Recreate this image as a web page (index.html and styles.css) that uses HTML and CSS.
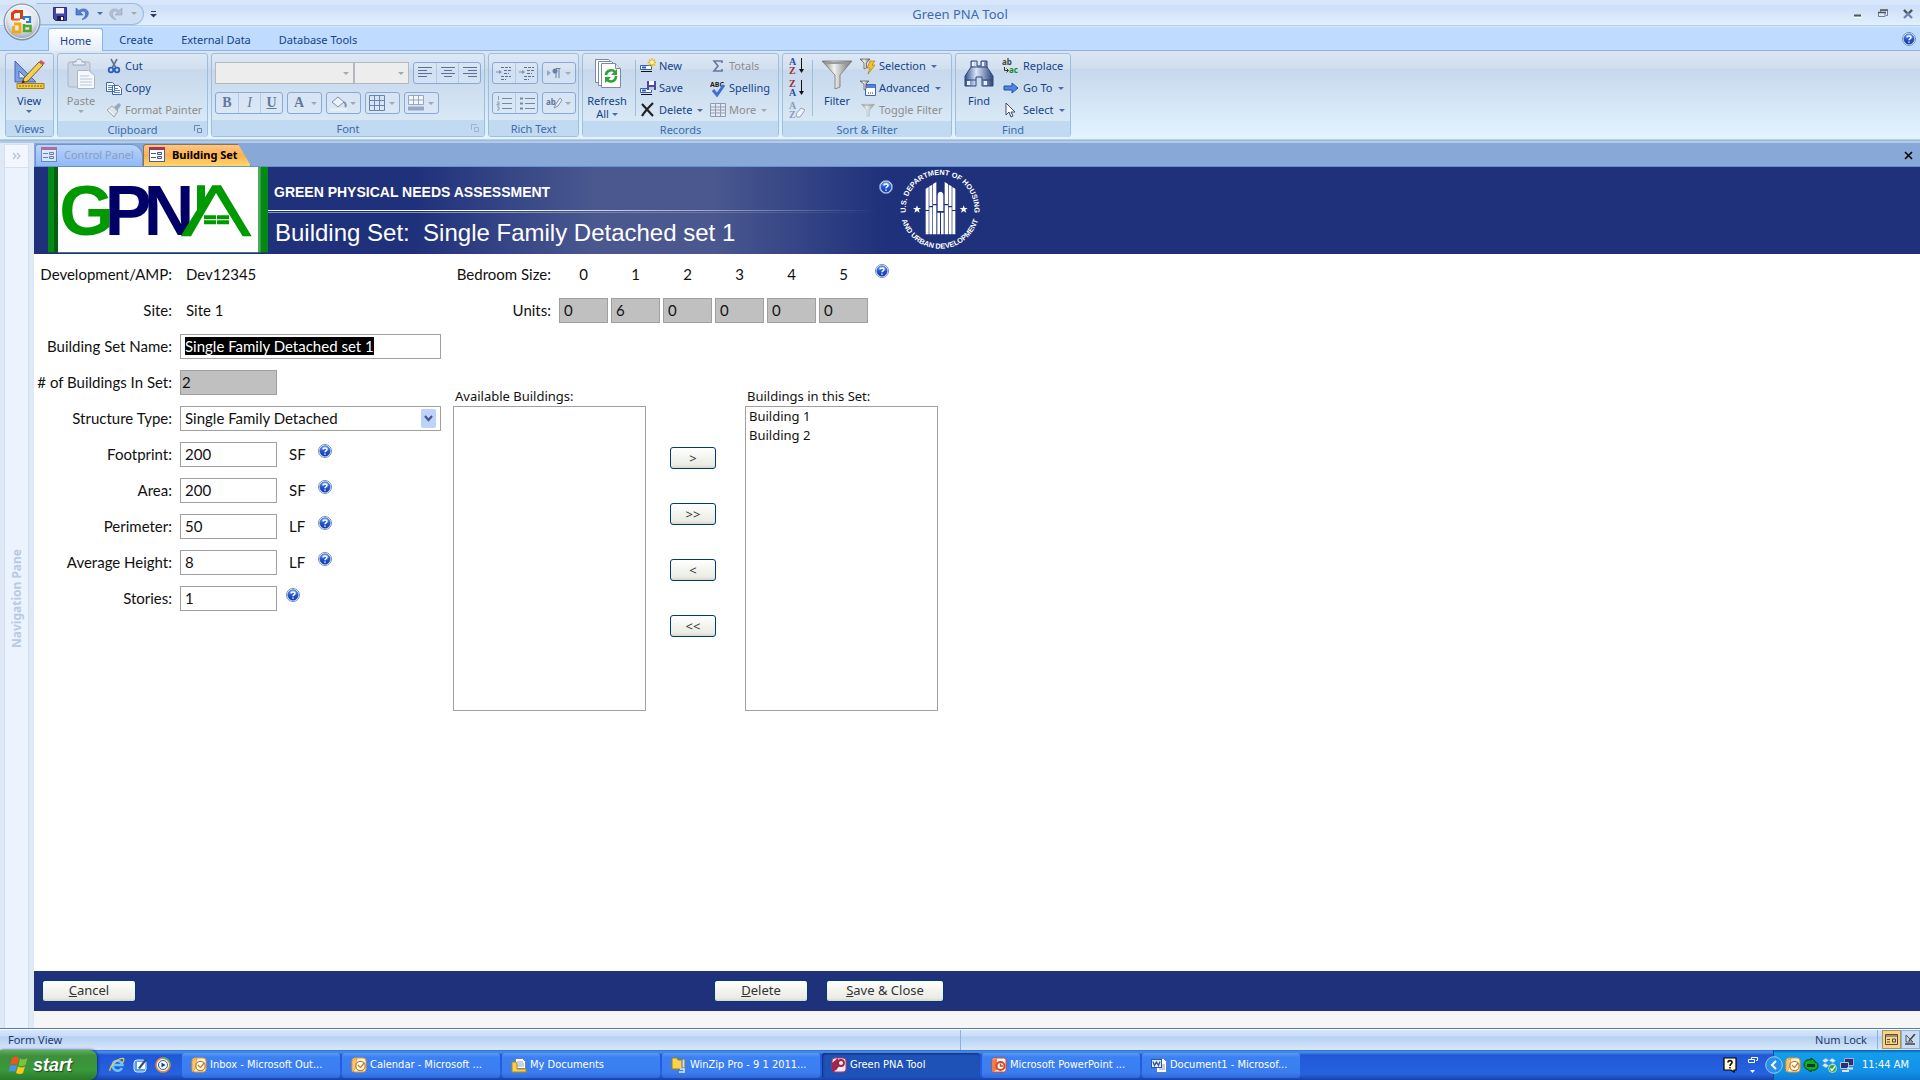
FILE: index.html
```html
<!DOCTYPE html>
<html lang="en">
<head>
<meta charset="utf-8">
<title>Green PNA Tool</title>
<link rel="stylesheet" href="styles.css">
</head>
<body>
<svg class="defs" aria-hidden="true">
  <defs>
    <linearGradient id="blueball" x1="0" y1="0" x2="0" y2="1"><stop offset="0" stop-color="#7fb0f5"/><stop offset=".5" stop-color="#1f57d8"/><stop offset="1" stop-color="#1238b0"/></linearGradient>
    <linearGradient id="steel" x1="0" y1="0" x2="1" y2="0"><stop offset="0" stop-color="#777"/><stop offset=".4" stop-color="#f2f2f2"/><stop offset="1" stop-color="#6d6d6d"/></linearGradient>
    <linearGradient id="bino" x1="0" y1="0" x2="1" y2="0"><stop offset="0" stop-color="#33508c"/><stop offset=".4" stop-color="#dbe6fa"/><stop offset="1" stop-color="#2c4377"/></linearGradient>
    <radialGradient id="orb" cx=".5" cy=".35" r=".65"><stop offset="0" stop-color="#ffffff"/><stop offset=".6" stop-color="#dfe5ec"/><stop offset="1" stop-color="#8d9aab"/></radialGradient>
  </defs>
  <symbol id="help" viewBox="0 0 14 14">
    <circle cx="7" cy="7" r="6.500" fill="#fff" stroke="#6d8fc4"/>
    <circle cx="7" cy="7" r="5.200" fill="url(#blueball)" stroke="#2a50a8" stroke-width=".6"/>
    <path d="M5 5.600C5 3.500 9 3.500 9 5.600C9 6.900 7 6.900 7 8.300M7 9.500V10.700" fill="none" stroke="#fff" stroke-width="1.500"/>
  </symbol>
  <symbol id="formicon" viewBox="0 0 16 15">
    <rect x=".5" y=".5" width="15" height="14" fill="#fff" stroke="#4a5f9e"/>
    <rect x="0" y="0" width="16" height="3" fill="#a5355c"/>
    <path d="M2 6.500H7M2 10.500H7" stroke="#44547d"/><path d="M8.500 5.500h4v2h-4zM8.500 9.500h4v2h-4z" fill="#dfe8f8" stroke="#44547d"/>
  </symbol>
  <symbol id="outlook" viewBox="0 0 16 16">
    <rect x="1" y="1" width="14" height="14" rx="3" fill="#fff3d6" stroke="#e8962e"/>
    <path d="M1 4L6 1L4 12L1 15z" fill="#f7c774" stroke="#d98722" stroke-width=".6"/>
    <circle cx="9.500" cy="9" r="4.600" fill="#fff" stroke="#c77d1e" stroke-width="1.200"/><path d="M7 8l2.500 2.600L13 6" fill="none" stroke="#c77d1e" stroke-width="1.300"/>
  </symbol>
  <symbol id="funnel" viewBox="0 0 32 32">
    <path d="M1 3H31L19 17V29L14 31V17z" fill="url(#steel)" stroke="#777" stroke-width=".8"/><path d="M3 4H29L27 6H5z" fill="#999"/>
  </symbol>
</svg>

<header class="titlebar">
  <div class="quickbar">
    <div class="qat">
      <button class="plain" aria-label="Save"><svg width="14" height="14" viewBox="0 0 14 14"><path d="M.500.500h13v13h-11l-2-2z" fill="#4747a8" stroke="#2c2c80"/><path d="M3 1h8v5.500H3z" fill="#f4f4fb"/><path d="M4 9h7v5H4z" fill="#1d1d46"/><path d="M8 10h2v3H8z" fill="#fff"/></svg></button>
      <button class="plain" aria-label="Undo"><svg width="14" height="14" viewBox="0 0 14 14"><path d="M1 1v7h7L5.500 5.500C8 3 11 4 10.500 7.500C10.300 9.500 9 11 7 12.500C11 12 13.500 9 13.300 6C13 2 8 .500 4 3.500z" fill="#4f7fd6" stroke="#2d59ad" stroke-width=".6"/></svg></button>
      <i class="caret"></i>
      <button class="plain" aria-label="Redo"><svg width="14" height="14" viewBox="0 0 14 14"><path d="M13 1v7H6l2.500-2.500C6 3 3 4 3.500 7.500C3.700 9.500 5 11 7 12.500C3 12 .500 9 .700 6C1 2 6 .500 10 3.500z" fill="#b4c0d2" stroke="#94a3ba" stroke-width=".6"/></svg></button>
      <i class="caret off"></i>
    </div>
    <button class="plain" aria-label="Customize"><svg width="7" height="8" viewBox="0 0 7 8"><path d="M1 1.500H6" stroke="#2b3b63"/><path d="M0 4H7L3.500 7.500z" fill="#2b3b63"/></svg></button>
  </div>
  <h1>Green PNA Tool</h1>
  <div class="winbtns">
    <button class="plain" aria-label="Minimize"><svg width="10" height="10"><path d="M1 6.500H8" stroke="#555" stroke-width="2"/><path d="M1 8.500H8" stroke="#fff"/></svg></button>
    <button class="plain" aria-label="Restore"><svg width="10" height="10"><path d="M2.500 3V1.500h7v5H8" fill="none" stroke="#6d7f9e"/><path d="M.500 3.500h6.500v4H.500z" fill="#dfeaf9" stroke="#6782ad"/><path d="M0 3.500H8M2 1H10" stroke="#555" stroke-width="1.500"/></svg></button>
    <button class="plain" aria-label="Close"><svg width="10" height="10"><path d="M1 1l8 8M9 1l-8 8" stroke="#6f86ae" stroke-width="2.400"/><path d="M1 1l3 3M9 1L6 4" stroke="#555" stroke-width="2"/></svg></button>
  </div>
  <button class="orb" aria-label="Office"><svg width="38" height="38" viewBox="0 0 38 38"><circle cx="19" cy="19" r="18" fill="url(#orb)" stroke="#77879c"/><circle cx="19" cy="19" r="16.500" fill="none" stroke="#fff" opacity=".7"/>
    <path d="M9.500 17V10.500L12 8.500h6.500V16" fill="none" stroke="#d8400f" stroke-width="3"/><path d="M9 16.500h8" stroke="#e9551c" stroke-width="2"/>
    <path d="M21 17V14h6v5h-4" fill="none" stroke="#2b7cd0" stroke-width="2.200"/><path d="M11 21h6v8h-6.500v-6" fill="none" stroke="#f3a712" stroke-width="2.800"/><path d="M21 21v7h6.500v-5H22" fill="none" stroke="#58a52b" stroke-width="2.600"/></svg></button>
</header>

<nav class="tabs">
  <a class="tab on" href="#">Home</a><a class="tab" href="#">Create</a><a class="tab" href="#">External Data</a><a class="tab" href="#">Database Tools</a>
  <button class="plain tabhelp" aria-label="Help"><svg width="14" height="14"><use href="#help"/></svg></button>
</nav>

<div class="ribbon">
  <section class="group g-views">
    <div class="body">
      <button class="big"><svg width="32" height="32" viewBox="0 0 32 32"><path d="M2 3V24H23z" fill="#7f9fe0" stroke="#4467b8"/><path d="M6 13v7h7z" fill="#dce7f9" stroke="#4467b8"/><path d="M9 25l2-5L26 4l4 3L15 23z" fill="#f3cf53" stroke="#6b5213" stroke-width=".9"/><path d="M26 4l2-2 4 3-2 2z" fill="#c8586b"/><path d="M9 25l1-3 2 2z" fill="#222"/><path d="M4 25.500h27v5H4z" fill="#f2c744" stroke="#a87d12"/><path d="M7 27v2M10 27v2M13 27v2M16 27v2M19 27v2M22 27v2M25 27v2M28 27v2" stroke="#8d690e"/></svg><span>View</span><i class="caret"></i></button>
    </div><h2>Views</h2>
  </section>
  <section class="group g-clip">
    <div class="body">
      <button class="big off"><svg width="32" height="32" viewBox="0 0 32 32"><rect x="3" y="4" width="22" height="25" rx="2" fill="#cdd6e4" stroke="#a9b5c9"/><path d="M8 7V4h3c0-4 6-4 6 0h3v3z" fill="#e9eef5" stroke="#9aa8bd"/><path d="M12.500 12.500h11l6 5v13h-17z" fill="#f6f9fd" stroke="#a9b5c9"/><path d="M15 18h9M15 21h12M15 24h12M15 27h12" stroke="#b9c5d8"/></svg><span>Paste</span><i class="caret"></i></button>
      <div class="col">
        <button class="small"><svg width="16" height="16" viewBox="0 0 16 16"><path d="M5 1l5 9M11 1L6 10" stroke="#66748f" stroke-width="1.600"/><circle cx="5" cy="12" r="2.300" fill="none" stroke="#2d5cc0" stroke-width="1.800"/><circle cx="11" cy="12" r="2.300" fill="none" stroke="#2d5cc0" stroke-width="1.800"/></svg>Cut</button>
        <button class="small"><svg width="16" height="16" viewBox="0 0 16 16"><path d="M.500 2.500h6l2 2v7h-8zM6.500 5.500h6l3 3v6h-9z" fill="#fff" stroke="#3f65b0"/><path d="M2 5.500h4M2 7.500h4M2 9.500h4M8 8.500h4M8 10.500h6M8 12.500h6" stroke="#5b84d0"/></svg>Copy</button>
        <button class="small off"><svg width="16" height="16" viewBox="0 0 16 16"><path d="M1 8l5-4 6 5-4 6z" fill="#dfe3ea" stroke="#9fa8b8"/><path d="M8 5l5-4 2 2-4 6z" fill="#9aa6ba"/><path d="M3 8l5 5" stroke="#fff"/></svg>Format Painter</button>
      </div>
    </div><h2>Clipboard<svg class="launch" width="8" height="8"><path d="M.500 6V.500H6M3.500 3.500h4v4h-4z" fill="none" stroke="#6b87b3"/></svg></h2>
  </section>
  <section class="group g-font">
    <div class="body tools">
      <div class="line">
        <button class="combo wide" aria-label="Font"><i class="caret"></i></button><button class="combo size" aria-label="Font size"><i class="caret"></i></button>
        <div class="set"><button aria-label="Align left"><svg width="16" height="14"><path d="M1 1.500h14M1 4.500h9M1 7.500h14M1 10.500h9" stroke="#5d6f92"/></svg></button><button aria-label="Center"><svg width="16" height="14"><path d="M1 1.500h14M4 4.500h8M1 7.500h14M4 10.500h8" stroke="#5d6f92"/></svg></button><button aria-label="Align right"><svg width="16" height="14"><path d="M1 1.500h14M6 4.500h9M1 7.500h14M6 10.500h9" stroke="#5d6f92"/></svg></button></div>
      </div>
      <div class="line">
        <div class="set"><button class="glyph b">B</button><button class="glyph i">I</button><button class="glyph u">U</button></div>
        <div class="set drop"><button class="glyph">A</button><i class="caret"></i></div>
        <div class="set drop"><button aria-label="Fill"><svg width="17" height="16"><path d="M2 7l6-5 6 5-6 5z" fill="#eef2f8" stroke="#8190ad"/><path d="M14 7c2 2 2 4 1 5" fill="none" stroke="#8190ad" stroke-width="2"/><path d="M0 14.500h17" stroke="#e9eef4" stroke-width="3"/></svg></button><i class="caret"></i></div>
        <div class="set drop"><button aria-label="Gridlines"><svg width="17" height="17"><path d="M.500.500h15v15H.500zM5.500.500v15M10.500.500v15M.500 5.500h15M.500 10.500h15" fill="none" stroke="#6b83ae"/></svg></button><i class="caret"></i></div>
        <div class="set drop"><button aria-label="Row colour"><svg width="17" height="17"><path d="M.500.500h15v9H.500zM5.500.500v9M10.500.500v9M.500 5h15" fill="#f3f6fa" stroke="#98a7c0"/><path d="M0 13.500h16" stroke="#98a7c6" stroke-width="4"/></svg></button><i class="caret"></i></div>
      </div>
    </div><h2>Font<svg class="launch" width="8" height="8"><path d="M.500 6V.500H6M3.500 3.500h4v4h-4z" fill="none" stroke="#9fb2cf"/></svg></h2>
  </section>
  <section class="group g-rich">
    <div class="body tools">
      <div class="line">
        <div class="set"><button aria-label="Decrease indent"><svg width="16" height="15"><path d="M5 1.500h10M8 4.500h7M8 7.500h5M5 10.500h10M5 13.500h5" stroke="#5d6f92" stroke-dasharray="3 1"/><path d="M6 6L3 4v4z" fill="#8190ad"/><path d="M0 6h4" stroke="#8190ad"/></svg></button><button aria-label="Increase indent"><svg width="16" height="15"><path d="M5 1.500h10M8 4.500h7M8 7.500h5M5 10.500h10M5 13.500h5" stroke="#5d6f92" stroke-dasharray="3 1"/><path d="M3 4l3 2-3 2z" fill="#8190ad"/><path d="M0 6h4" stroke="#8190ad"/></svg></button></div>
        <div class="set drop"><button aria-label="Direction"><svg width="15" height="13"><path d="M0 3l4 3-4 3z" fill="#97a6c0"/><path d="M9 2v9M12 2v9M13.500 1.500H9" stroke="#6b7ea4"/><circle cx="8" cy="4" r="2.500" fill="#6b7ea4"/></svg></button><i class="caret"></i></div>
      </div>
      <div class="line">
        <div class="set"><button aria-label="Numbering"><svg width="16" height="15"><path d="M6 2.500h10M6 7.500h10M6 12.500h10" stroke="#7586a8"/><path d="M2.500 0v4M1 6h2v2H1v1h3M1 11h2v3H1" fill="none" stroke="#8c9bb8"/></svg></button><button aria-label="Bullets"><svg width="16" height="15"><path d="M6 2.500h10M6 7.500h10M6 12.500h10" stroke="#7586a8"/><path d="M1 2.500h3M1 7.500h3M1 12.500h3" stroke="#7586a8" stroke-width="2"/></svg></button></div>
        <div class="set drop"><button aria-label="Highlight"><svg width="17" height="16"><text x="0" y="10" class="ab" fill="#64759a">ab</text><path d="M8 13l2-4 4-6 2 2-4 6z" fill="#eef2f8" stroke="#8190ad"/></svg></button><i class="caret"></i></div>
      </div>
    </div><h2>Rich Text</h2>
  </section>
  <section class="group g-rec">
    <div class="body">
      <button class="big wider"><svg width="32" height="32" viewBox="0 0 32 32"><path d="M4.500 1.500h13l5 5v18h-18z" fill="#fff" stroke="#7d8aa5"/><path d="M7.500 3.500h13l5 5v19h-18z" fill="#fff" stroke="#7d8aa5"/><path d="M10.500 5.500h14l5 5v19h-19z" fill="#fff" stroke="#7d8aa5"/><path d="M24.500 5.500v5h5" fill="#dbe4f2" stroke="#7d8aa5"/><path d="M15 17c0-5 7-6 9-3M25 18c0 6-7 7-9 3" fill="none" stroke="#2da336" stroke-width="2.600"/><path d="M26 11v6h-6zM14 25v-6h6z" fill="#2da336"/></svg><span>Refresh<br>All <i class="caret"></i></span></button>
      <div class="rule"></div>
      <div class="col c1">
        <button class="small"><svg width="16" height="16" viewBox="0 0 16 16"><path d="M.500 7.500h11v4H.500z" fill="#fff" stroke="#2f5fb8"/><path d="M2 9.500h4" stroke="#2f5fb8" stroke-width="2"/><path d="M1 13.500h11" stroke="#111"/><path d="M12 0v9M7.500 4.500h9M9 1.500l6 6M15 1.500l-6 6" stroke="#f0b310" stroke-width="1.300"/><circle cx="12" cy="4.500" r="2" fill="#fff3a8"/></svg>New</button>
        <button class="small"><svg width="16" height="16" viewBox="0 0 16 16"><path d="M.500 8.500h11v4H.500z" fill="#fff" stroke="#2f5fb8"/><path d="M2 10.500h4" stroke="#2f5fb8" stroke-width="2"/><path d="M1 14.500h11" stroke="#111"/><path d="M7 1h9v9H7z" fill="#4a4a9f"/><path d="M9 1h5v4H9z" fill="#fff"/><path d="M9 7h5v3H9z" fill="#c7c7e0"/></svg>Save</button>
        <button class="small"><svg width="16" height="16" viewBox="0 0 16 16"><path d="M2 2l11 12M13 1C9 5 5 9 2 14" fill="none" stroke="#222" stroke-width="2.200"/></svg>Delete<i class="caret"></i></button>
      </div>
      <div class="col">
        <button class="small off"><svg width="16" height="16" viewBox="0 0 16 16"><path d="M12 5V3H4l4 5-4 5h8v-2" fill="none" stroke="#65779c" stroke-width="1.600"/></svg>Totals</button>
        <button class="small"><svg width="16" height="18" viewBox="0 0 16 18"><text x="0" y="8" class="abc" fill="#222">ABC</text><path d="M3 11l4 5 7-10" fill="none" stroke="#3d6fd6" stroke-width="3"/></svg>Spelling</button>
        <button class="small off"><svg width="16" height="16" viewBox="0 0 16 16"><path d="M.500 1.500h15v13H.500zM5.500 1.500v13M10.500 1.500v13M.500 5h15M.500 8h15M.500 11h15" fill="#e6ebf3" stroke="#8d9bb5"/></svg>More<i class="caret"></i></button>
      </div>
    </div><h2>Records</h2>
  </section>
  <section class="group g-sort">
    <div class="body">
      <div class="col sorts">
        <button class="small" aria-label="Ascending"><svg width="16" height="18"><text x="0" y="8" class="az" fill="#2c4fa3">A</text><text x="0" y="17" class="az" fill="#a12d2d">Z</text><path d="M12.500 1v14" stroke="#111"/><path d="M10 12h5l-2.500 4z" fill="#111"/></svg></button>
        <button class="small" aria-label="Descending"><svg width="16" height="18"><text x="0" y="8" class="az" fill="#a12d2d">Z</text><text x="0" y="17" class="az" fill="#2c4fa3">A</text><path d="M12.500 1v14" stroke="#111"/><path d="M10 12h5l-2.500 4z" fill="#111"/></svg></button>
        <button class="small" aria-label="Clear sorts"><svg width="16" height="18"><text x="0" y="8" class="az" fill="#8d9bb5">A</text><text x="0" y="17" class="az" fill="#8d9bb5">Z</text><path d="M7 13l5-6 4 2-5 7H8z" fill="#f0f3f8" stroke="#95a2b8"/></svg></button>
      </div>
      <div class="rule"></div>
      <button class="big"><svg width="32" height="32"><use href="#funnel"/></svg><span>Filter</span></button>
      <div class="col">
        <button class="small"><svg width="16" height="16" viewBox="0 0 16 16"><path d="M0 1h10L6.500 5v5L4 11V5z" fill="url(#steel)" stroke="#555" stroke-width=".7"/><path d="M10 3h5l-3 4h3l-7 9 2-6H7z" fill="#f8c22c" stroke="#a97b10" stroke-width=".7"/></svg>Selection<i class="caret"></i></button>
        <button class="small"><svg width="16" height="16" viewBox="0 0 16 16"><path d="M5.500 4.500h10v11h-10z" fill="#fff" stroke="#3d66b5"/><path d="M6 6.500h9" stroke="#4f82df" stroke-width="3"/><path d="M8 13h1M10 13h1M12 13h1" stroke="#333"/><path d="M0 1h9L6 4v5L4 10V4z" fill="url(#steel)" stroke="#555" stroke-width=".7"/></svg>Advanced<i class="caret"></i></button>
        <button class="small off"><svg width="16" height="14" opacity=".7"><use href="#funnel"/></svg>Toggle Filter</button>
      </div>
    </div><h2>Sort &amp; Filter</h2>
  </section>
  <section class="group g-find">
    <div class="body">
      <button class="big"><svg width="32" height="32" viewBox="0 0 32 32"><path d="M8 3h6v5h4V3h6v6l6 9v10H19V19h-6v9H2V18l6-9z" fill="url(#bino)" stroke="#2f4678"/><path d="M2 22h11M19 22h11M8 9h16" stroke="#2f4678"/><path d="M4 23h3v4H4zM21 23h3v4h-3zM9 4h2v4H9zM19 4h2v4h-2z" fill="#e9f0fc"/></svg><span>Find</span></button>
      <div class="col">
        <button class="small"><svg width="18" height="18" viewBox="0 0 18 18"><text x="0" y="8" class="ab" fill="#444">ab</text><text x="7" y="16" class="ab" fill="#188a2b">ac</text><path d="M2.500 10v3.500H6M4.500 11.500l2 2-2 2" fill="none" stroke="#333"/></svg>Replace</button>
        <button class="small"><svg width="18" height="16" viewBox="0 0 18 16"><path d="M2 6h8V3l6 5-6 5v-3H2z" fill="#4f86e8" stroke="#23509f"/></svg>Go To<i class="caret"></i></button>
        <button class="small"><svg width="18" height="16" viewBox="0 0 18 16"><path d="M4 1v12l3-3 2 5 2-1-2-4h4z" fill="#fff" stroke="#3c4a66"/></svg>Select<i class="caret"></i></button>
      </div>
    </div><h2>Find</h2>
  </section>
</div>

<div class="workspace">
  <aside class="navpane">
    <button class="expand" aria-label="Expand"><svg width="10" height="8"><path d="M1 1l3 3-3 3M5 1l3 3-3 3" fill="none" stroke="#b3c4dd" stroke-width="1.300"/></svg></button>
    <div class="strip"><span>Navigation Pane</span></div>
  </aside>
  <div class="doc">
    <div class="doctabs">
      <a class="dtab" href="#"><svg width="16" height="15" opacity=".6"><use href="#formicon"/></svg>Control Panel</a>
      <a class="dtab on" href="#"><svg width="16" height="15"><use href="#formicon"/></svg>Building Set</a>
      <button class="plain dclose" aria-label="Close"><svg width="9" height="9"><path d="M1 1l7 7M8 1L1 8" stroke="#000" stroke-width="1.600"/></svg></button>
    </div>

    <div class="banner">
      <svg class="logo" width="220" height="86" viewBox="54 20 660 258" role="img" aria-label="GPNA">
        <path d="M54 20h660v256H54z" fill="#028a14"/><path d="M72 20h12v256H72z" fill="#04600c"/><path d="M684 20h8v256h-8z" fill="#4fa85a"/>
        <path d="M84 20h600v256H84z" fill="#fff"/>
        <text x="88" y="224" class="gpn" fill="#009900">G</text><text x="224" y="224" class="gpn" fill="#000066">P</text><text x="341" y="224" class="gpn" fill="#000066">N</text>
        <path d="M452 228L501 148V75h24v36l22-36h26l92 153h-27L558 98L483 228z" fill="#009900"/>
        <path d="M522 165h36v12h-36zM561 165h36v12h-36zM522 180h36v12h-36zM561 180h36v12h-36z" fill="#009900"/>
      </svg>
      <div class="heading"><p>GREEN PHYSICAL NEEDS ASSESSMENT</p><h2>Building Set:  Single Family Detached set 1</h2></div>
      <button class="plain bhelp" aria-label="Help"><svg width="14" height="14"><use href="#help"/></svg></button>
      <svg class="seal" width="84" height="84" viewBox="1195 19 252 252" fill="#fff">
        <path id="arcTop" d="M1224 180A103 103 0 1 1 1418 180" fill="none"/><path id="arcBot" d="M1202 145A119 119 0 0 0 1440 145" fill="none"/>
        <text class="ring"><textPath href="#arcTop" startOffset="50%" text-anchor="middle">U.S. DEPARTMENT OF HOUSING</textPath></text>
        <text class="ring"><textPath href="#arcBot" startOffset="50%" text-anchor="middle">AND URBAN DEVELOPMENT</textPath></text>
        <path d="M1278 84l9-5v69h-9zM1289 77l9-5v64h-9zM1300 70l10-6v66h-10zM1335 64l10 6v60h-10zM1347 72l9 5v59h-9zM1358 79l9 5v64h-9zM1278 151h9v70h-9zM1289 140h9v81h-9zM1300 134h10v87h-10zM1335 134h10v87h-10zM1347 140h9v81h-9zM1358 151h9v70h-9zM1314 104q0-11 10-11 8 3 7 12v46h-17zM1313 156h8v65h-8zM1324 156h8v65h-8z"/>
        <path d="M1252 134l3 8h9l-7 5 3 9-8-5-8 5 3-9-7-5h9zM1392 134l3 8h9l-7 5 3 9-8-5-8 5 3-9-7-5h9z"/>
      </svg>
    </div>

    <form class="form">
      <div class="fields">
        <div class="row"><span class="lab">Development/AMP:</span><span class="val">Dev12345</span></div>
        <div class="row"><span class="lab">Site:</span><span class="val">Site 1</span></div>
        <div class="row"><label class="lab" for="setname">Building Set Name:</label><input class="box long" id="setname" value="Single Family Detached set 1"></div>
        <div class="row"><label class="lab" for="count"># of Buildings In Set:</label><input class="box ro count" id="count" value="2" readonly></div>
        <div class="row"><label class="lab" for="stype">Structure Type:</label><span class="pick"><select class="box long" id="stype"><option>Single Family Detached</option></select><svg width="15" height="19"><rect width="15" height="19" rx="2" fill="#bfd2fa"/><path d="M4 7l3.500 4L11 7" fill="none" stroke="#44598a" stroke-width="2.200"/></svg></span></div>
        <div class="row"><label class="lab" for="foot">Footprint:</label><input class="box" id="foot" value="200"><span class="unit">SF</span><button type="button" class="plain fhelp" aria-label="Help"><svg width="14" height="14"><use href="#help"/></svg></button></div>
        <div class="row"><label class="lab" for="area">Area:</label><input class="box" id="area" value="200"><span class="unit">SF</span><button type="button" class="plain fhelp" aria-label="Help"><svg width="14" height="14"><use href="#help"/></svg></button></div>
        <div class="row"><label class="lab" for="perim">Perimeter:</label><input class="box" id="perim" value="50"><span class="unit">LF</span><button type="button" class="plain fhelp" aria-label="Help"><svg width="14" height="14"><use href="#help"/></svg></button></div>
        <div class="row"><label class="lab" for="height">Average Height:</label><input class="box" id="height" value="8"><span class="unit">LF</span><button type="button" class="plain fhelp" aria-label="Help"><svg width="14" height="14"><use href="#help"/></svg></button></div>
        <div class="row"><label class="lab" for="stories">Stories:</label><input class="box" id="stories" value="1"><button type="button" class="plain fhelp near" aria-label="Help"><svg width="14" height="14"><use href="#help"/></svg></button></div>
      </div>
      <div class="side">
        <div class="units">
          <span class="ulab">Bedroom Size:</span><span>0</span><span>1</span><span>2</span><span>3</span><span>4</span><span>5</span><button type="button" class="plain uhelp" aria-label="Help"><svg width="14" height="14"><use href="#help"/></svg></button>
          <span class="ulab">Units:</span><input class="box ro" aria-label="0 bedroom units" value="0" readonly><input class="box ro" aria-label="1 bedroom units" value="6" readonly><input class="box ro" aria-label="2 bedroom units" value="0" readonly><input class="box ro" aria-label="3 bedroom units" value="0" readonly><input class="box ro" aria-label="4 bedroom units" value="0" readonly><input class="box ro" aria-label="5 bedroom units" value="0" readonly>
        </div>
        <div class="transfer">
          <div class="list"><label for="avail">Available Buildings:</label><select id="avail" size="10" multiple></select></div>
          <div class="moves"><button type="button">&gt;</button><button type="button">&gt;&gt;</button><button type="button">&lt;</button><button type="button">&lt;&lt;</button></div>
          <div class="list"><label for="inset">Buildings in this Set:</label><select id="inset" size="10" multiple><option>Building 1</option><option>Building 2</option></select></div>
        </div>
      </div>
    </form>

    <footer class="actions">
      <button class="act"><u>C</u>ancel</button><button class="act del"><u>D</u>elete</button><button class="act save"><u>S</u>ave &amp; Close</button>
    </footer>
    <div class="below"></div>
  </div>
</div>

<div class="status">
  <span class="mode">Form View</span><span class="lock">Num Lock</span>
  <div class="views"><button class="on" aria-label="Form view"><svg width="13" height="11"><path d="M.500.500h12v10H.500zM0 2h13M2 5.500h3M2 8h3M7.500 5h3v3h-3z" fill="none" stroke="#4d4d4d"/></svg></button><button aria-label="Design view"><svg width="11" height="11"><path d="M1 1v7h7z" fill="none" stroke="#555"/><path d="M10 0L4 7M0 10h10" stroke="#444" stroke-width="1.600"/></svg></button></div>
</div>

<div class="taskbar">
  <button class="start"><svg width="20" height="20" viewBox="0 0 20 20"><path d="M3 3q4-3 7 0l-2 7q-3-2-7 0z" fill="#f0541e"/><path d="M11 3.500q4 2 7.500-.500l-2 7q-3 2-7 .500z" fill="#7cc242"/><path d="M1 11q4-2 7 0l-2 6q-3-2-6.500 0z" fill="#4a90f0"/><path d="M9 11.500q4 2 7 0l-2 6.500q-3 2-7 0z" fill="#fbc916"/></svg>start</button>
  <div class="quick">
    <button class="plain" aria-label="Internet Explorer"><svg width="16" height="16" viewBox="0 0 16 16"><path d="M13 11a5 5 0 1 1 .5-3H4" fill="none" stroke="#6cc4ff" stroke-width="2.500"/><path d="M1 14C0 10 9 1 14 1.500c2 .5 0 4-1 5" fill="none" stroke="#f5c83c" stroke-width="1.300"/></svg></button>
    <button class="plain" aria-label="Show desktop"><svg width="16" height="16" viewBox="0 0 16 16"><rect x="2" y="3" width="12" height="12" rx="3" fill="#5aa0ec" stroke="#d2e6ff"/><path d="M5 5h8v7H5z" fill="#fff"/><path d="M6 11l7-9 2 1-7 9z" fill="#2d4f86"/></svg></button>
    <button class="plain" aria-label="Media Player"><svg width="16" height="16" viewBox="0 0 16 16"><circle cx="8" cy="8" r="7" fill="#e9eef7" stroke="#e98b28" stroke-width="1.600"/><path d="M8 1a7 7 0 0 1 7 7" fill="none" stroke="#53b848" stroke-width="1.600"/><circle cx="8" cy="8" r="4.500" fill="#fff" stroke="#345fae"/><path d="M6.500 5.500v5l4-2.500z" fill="#1c3d87"/></svg></button>
  </div>
  <div class="tasks">
    <button><svg width="16" height="16"><use href="#outlook"/></svg>Inbox - Microsoft Out...</button>
    <button><svg width="16" height="16"><use href="#outlook"/></svg>Calendar - Microsoft ...</button>
    <button><svg width="16" height="16" viewBox="0 0 16 16"><path d="M4.500 1.500h7l3 3v7h-10z" fill="#fff" stroke="#6a7ea8"/><path d="M6 5h6M6 7h7M6 9h7" stroke="#8ba3d0"/><path d="M1 5h4l1 2v5h9v3H1z" fill="#f6cf59" stroke="#b48915"/></svg>My Documents</button>
    <button><svg width="16" height="16" viewBox="0 0 16 16"><path d="M1 1h5l1 2h7v9H1z" fill="#f8d34e" stroke="#a97e0b"/><path d="M11 2h3v9h-3z" fill="#d5dce8" stroke="#60708d"/><path d="M9 12h4v3H8" fill="none" stroke="#bcd0ef" stroke-width="2"/></svg>WinZip Pro - 9 1 2011...</button>
    <button class="on"><svg width="16" height="16" viewBox="0 0 16 16"><rect x="1" y="1" width="14" height="14" rx="3" fill="#f6e8ee" stroke="#b23a60"/><path d="M1 6l6-5v7l-4 7H1z" fill="#a2264e"/><circle cx="10" cy="6" r="3" fill="none" stroke="#9b2449" stroke-width="1.800"/><path d="M8 8l-4 5" stroke="#9b2449" stroke-width="2"/></svg>Green PNA Tool</button>
    <button><svg width="16" height="16" viewBox="0 0 16 16"><rect x="1" y="1" width="14" height="14" rx="2" fill="#fff" stroke="#d8461d"/><path d="M1 3l5-2v12l-5 2z" fill="#ef7a4a"/><circle cx="9.500" cy="9" r="4" fill="#fff" stroke="#d8461d" stroke-width="2"/><path d="M9.500 6.500V9H12" fill="none" stroke="#d8461d" stroke-width="1.500"/></svg>Microsoft PowerPoint ...</button>
    <button><svg width="16" height="16" viewBox="0 0 16 16"><path d="M5.500 1.500h7l3 3v11h-10z" fill="#fff" stroke="#5b7ab5"/><path d="M10 8h4M10 10h4M8 12h6" stroke="#7f9cd3"/><rect x=".500" y="2.500" width="10" height="8" fill="#e7effb" stroke="#2d54a8"/><path d="M2 4.500l1.500 4 2-3.500 2 3.500 1.500-4" fill="none" stroke="#2d54a8" stroke-width="1.300"/></svg>Document1 - Microsof...</button>
  </div>
  <button class="plain ask" aria-label="Help"><svg width="14" height="16" viewBox="0 0 14 16"><path d="M1 1h12v12h-2v2l-3-2H1z" fill="#fffbd8" stroke="#000" stroke-width="1.200"/><path d="M5 5.500C5 3 9 3 9 5.500C9 7 7 7 7 9M7 10v1.500" fill="none" stroke="#111" stroke-width="1.600"/></svg></button>
  <button class="plain lang" aria-label="Options"><svg width="10" height="18"><path d="M3.500 3V1.500h6v3H8M.500 3.500h6v3h-6z" fill="none" stroke="#fff"/><path d="M2 14h5l-2.500 3z" fill="#fff"/></svg></button>
  <div class="tray">
    <button class="plain chev" aria-label="Show hidden icons"><svg width="18" height="18" viewBox="0 0 18 18"><circle cx="9" cy="9" r="8.300" fill="#2a8fe8" stroke="#8fd0fa"/><path d="M11 5L7 9l4 4" fill="none" stroke="#fff" stroke-width="2"/></svg></button>
    <svg width="16" height="16" viewBox="0 0 16 16"><use href="#outlook"/></svg>
    <svg width="16" height="16" viewBox="0 0 16 16"><path d="M1 8c0-4 3-6 7-5V1l4 3v1c3 1 3 2 3 4 0 3-3 5-7 4v2l-4-3C2 11 1 10 1 8z" fill="#17a821" stroke="#063f0a"/><path d="M4 7h8v3H4z" fill="#133d18"/></svg>
    <svg width="16" height="16" viewBox="0 0 16 16"><path d="M5 1l3 2.500L4 6 1 3.500zM11 1l4 2.500L12 6 8 3.500zM4 6l4 2.500L5 11 1 8.500zM12 6l3 2.500-4 2.500-3-2.500z" fill="#d6eafc" stroke="#4d9be0" stroke-width=".7"/><circle cx="11.500" cy="11.500" r="4" fill="#35a339" stroke="#e8f8e8" stroke-width=".7"/><path d="M9.500 11.500l1.500 2 3-4" fill="none" stroke="#fff" stroke-width="1.300"/></svg>
    <svg width="16" height="16" viewBox="0 0 16 16"><path d="M5.500 1.500h9v7h-9z" fill="#27336e" stroke="#9fb0d4"/><path d="M1.500 5.500h8v6h-8z" fill="#27336e" stroke="#b7c5e2"/><path d="M3 14h7M8 11.500h6" stroke="#dbe3f2" stroke-width="2"/></svg>
    <span>11:44 AM</span>
  </div>
</div>
<script>
const nameBox = document.getElementById('setname');
nameBox.focus();
nameBox.select();
</script>
</body>
</html>
```
FILE: styles.css
```css
* { box-sizing: border-box; }
body {
  margin: 0;
  min-height: 100vh;
  display: flex;
  flex-direction: column;
  background: #bfdbff;
  font: 11px/16px "Noto Sans", "Open Sans", sans-serif;
  color: #15428b;
}
h1, h2, p { margin: 0; font-weight: normal; }
svg { display: block; flex: none; }
button, input, select { font: inherit; color: inherit; margin: 0; }
button { padding: 0; border: 0; background: none; }
a { color: inherit; text-decoration: none; }
.defs { position: absolute; width: 0; height: 0; }
.plain { display: flex; align-items: center; justify-content: center; }
.caret {
  display: inline-block;
  border: 3px solid transparent;
  border-top-color: #4a6da8;
  border-bottom: 0;
  flex: none;
}
.caret.off, .off .caret, .tools .caret { border-top-color: #a3a9b3; }

/* title bar */
.titlebar {
  position: relative;
  display: grid;
  grid-template-columns: 1fr auto 1fr;
  align-items: center;
  height: 27px;
  background: linear-gradient(#d7e6fa 0 5px, #cadef7 5px, #e4effd 25px, #b0d2f2 25px 26px, #d8e8fc 26px);
}
.quickbar { display: flex; align-items: center; gap: 6px; padding-left: 36px; }
.qat {
  display: flex;
  align-items: center;
  gap: 8px;
  width: 108px;
  height: 22px;
  padding-left: 16px;
  border: 1px solid #9dbbe0;
  border-left-color: transparent;
  border-radius: 0 11px 11px 0;
  background: #cfe0f5;
}
.qat .caret + .plain { margin-left: -2px; }
.titlebar h1 { font-size: 13px; color: #3e6aaa; }
.winbtns { display: flex; justify-content: flex-end; gap: 15px; padding-right: 7px; }
.orb { position: absolute; left: 3px; top: 3px; z-index: 2; }

/* ribbon tabs */
.tabs { display: flex; gap: 4px; height: 24px; padding: 1px 4px 0 48px; border-bottom: 1px solid #8db2e3; }
.tab { height: 23px; padding: 0 12px; line-height: 24px; }
.tab.on { border: 1px solid #8db2e3; border-bottom: 0; border-radius: 3px 3px 0 0; background: linear-gradient(#fff, #e4edf8); padding: 0 11px; margin-bottom: -1px; }
.tabhelp { margin-left: auto; }

/* ribbon */
.ribbon {
  display: flex;
  gap: 3px;
  height: 92px;
  padding: 2px 2px 6px 5px;
  background: linear-gradient(#dae6f4, #cfdded 17px, #c7d8ed 18px, #e3f4ff 88px, #8aa6c9 89px, #b3cbe9 90px);
}
.group {
  display: flex;
  flex-direction: column;
  border: 1px solid #9ebfdb;
  border-radius: 3px;
  background: linear-gradient(#dee8f5, #d1dfef 15px, #c7d8ed 16px, #d8e8f5 66px);
}
.group .body { flex: 1; display: flex; padding-top: 1px; }
.group h2 { position: relative; height: 16px; font-size: 11px; line-height: 18px; text-align: center; color: #3e6aaa; background: #c1d9f1; border-radius: 0 0 2px 2px; }
.launch { position: absolute; right: 5px; top: 4px; }
.g-views { width: 49px; }
.g-clip { width: 151px; }
.g-font { width: 274px; }
.g-rich { width: 91px; }
.g-rec { width: 197px; }
.g-sort { width: 170px; }
.g-find { width: 116px; }
.big { display: flex; flex-direction: column; align-items: center; width: 46px; padding-top: 3px; line-height: 13px; }
.wider { width: 48px; }
.big svg { margin-bottom: 4px; }
.big > .caret { margin-top: 3px; }
.big .caret { vertical-align: 2px; }
.off { color: #8d8d8d; }
.col { display: flex; flex-direction: column; }
.g-clip .col { padding-left: 2px; }
.small { display: flex; align-items: center; gap: 3px; height: 22px; white-space: nowrap; }
.small .caret { margin-left: 2px; }
.c1 { width: 70px; }
.rule { width: 1px; margin: 5px 4px; background: #9ebfdb; }
.sorts { padding-left: 6px; }
.sorts + .rule { margin-left: 7px; margin-right: 1px; }
.tools.body { flex-direction: column; gap: 8px; padding: 8px 3px 0; }
.line { display: flex; gap: 4px; height: 22px; }
.combo { display: flex; align-items: center; justify-content: flex-end; padding-right: 4px; border: 1px solid #b5b9bf; background: #ededed; }
.wide { width: 139px; margin-right: -4px; }
.size { width: 55px; }
.set { display: flex; align-items: center; border: 1px solid #86a9d8; border-radius: 3px; background: rgba(225, 235, 248, .4); }
.set button { display: flex; align-items: center; justify-content: center; width: 22px; height: 20px; border-left: 1px solid #b4cae8; }
.set button:first-child { border-left: 0; }
.drop { width: 35px; justify-content: space-between; padding-right: 4px; }
.glyph { font: bold 14px/18px "Liberation Serif", serif; color: #66779b; }
.set .i { font-style: italic; font-weight: normal; }
.set .u { text-decoration: underline; }
.ab { font: bold 8px "Noto Sans", sans-serif; }
.abc { font: bold 7px "Noto Sans", sans-serif; }
.az { font: bold 10px "Liberation Serif", serif; }

/* work area */
.workspace { flex: 1; display: flex; }
.navpane { display: flex; flex-direction: column; width: 34px; padding: 1px 5px 0 4px; background: #dfe9f6; }
.expand { display: flex; align-items: center; justify-content: center; height: 24px; border: 1px solid #d5e1f1; background: #f3f7fd; }
.strip { flex: 1; display: flex; align-items: center; justify-content: center; border: 1px solid #d0def0; border-width: 0 1px; background: #ebf3fe; }
.strip span { writing-mode: vertical-rl; transform: rotate(180deg); font: bold 12px/16px "Noto Sans", sans-serif; color: #b9cae2; }
.doc { flex: 1; display: flex; flex-direction: column; min-width: 0; background: #fff; }
.doctabs { display: flex; height: 24px; padding: 1px 7px 0 1px; background: #88a9d8; border-bottom: 1px solid #6593cf; }
.dtab { display: flex; align-items: center; gap: 7px; width: 108px; padding: 0 0 2px 5px; border: 1px solid #6f93cc; border-bottom: 0; border-radius: 3px 12px 0 0; background: linear-gradient(#b8d3fb, #8fbaf8); color: #8c9db8; white-space: nowrap; }
.dtab.on { background: linear-gradient(#fdc587, #fdb04c 50%, #ffd86f); border-color: #8a7450; color: #000; font-weight: bold; clip-path: polygon(0 0, 88% 0, 100% 100%, 0 100%); }
.dclose { margin-left: auto; }

/* banner */
.banner {
  display: flex;
  height: 87px;
  padding-left: 14px;
  background: linear-gradient(90deg, #1f317b 380px, #4a588f 560px, #4a588f 680px, #1f317b 850px);
  color: #fff;
}
.heading { width: 611px; padding-left: 6px; font-family: "Liberation Sans", Arial, sans-serif; white-space: pre; background: linear-gradient(90deg, #fff, #fff 40%, transparent) 0 43px / 100% 1px no-repeat, linear-gradient(90deg, #8690b8, #8690b8 40%, transparent) 0 45px / 100% 1px no-repeat; }
.heading p { padding-top: 13px; font: bold 14px/24px "Liberation Sans", Arial, sans-serif; height: 46px; }
.heading h2 { font-size: 24px; line-height: 40px; padding-left: 1px; }
.bhelp { align-self: flex-start; margin-top: 13px; }
.seal { margin-left: 5px; }
.gpn { font: bold 210px "Liberation Sans", Arial, sans-serif; }
.ring { font: bold 22px "Liberation Sans", Arial, sans-serif; }

/* form */
.form { flex: 1; display: flex; align-items: flex-start; padding-top: 2px; color: #111; font: 15px/20px Lato, "Open Sans", sans-serif; }
.fields { width: 419px; }
.row { display: flex; align-items: center; height: 36px; }
.lab { width: 146px; padding-right: 8px; text-align: right; white-space: nowrap; }
.val { padding-left: 6px; }
.box { width: 97px; height: 25px; padding: 0 4px; border: 1px solid #a0a0a0; border-radius: 0; background: #fff; outline: 0; }
.box::selection { background: #000; color: #fff; }
.ro { background: #c0c0c0; }
.count { padding: 0 1px; }
.long { width: 261px; }
select.box { appearance: none; }
.pick { display: grid; align-items: center; }
.pick > * { grid-area: 1 / 1; }
.pick svg { justify-self: end; margin-right: 5px; pointer-events: none; }
.unit { width: 41px; padding-left: 12px; }
.fhelp { align-self: flex-start; margin-top: 8px; }
.near { margin-left: 9px; }
.units { display: grid; grid-template-columns: 103px repeat(6, 49px) 18px; column-gap: 3px; grid-auto-rows: 36px; align-items: center; text-align: center; }
.units .box { width: 49px; }
.ulab { text-align: right; padding-right: 5px; }
.uhelp { align-self: flex-start; margin-top: 8px; justify-self: end; }
.transfer { display: flex; margin-top: 59px; font: 13px/18px "Noto Sans", "Open Sans", sans-serif; }
.list { display: flex; flex-direction: column; width: 193px; }
.list label { padding: 0 2px 1px; }
.list select { appearance: none; height: 305px; border: 1px solid #a0a0a0; border-radius: 0; padding: 0; background: #fff; outline: 0; overflow: hidden; }
.list option { padding: 0 3px; min-height: 19px; line-height: 19px; }
.moves { display: flex; flex-direction: column; gap: 34px; padding: 60px 29px 0 24px; }
.moves button, .act { background: linear-gradient(#fff, #f3f3ee 50%, #ecebe5 85%, #d9d6c9); border: 1px solid #003c74; border-radius: 3px; color: #333; }
.moves button { width: 46px; height: 22px; line-height: 18px; }
.actions { display: flex; align-items: center; height: 40px; padding-left: 8px; background: #1f317b; }
.act { height: 22px; width: 94px; padding-bottom: 2px; font: 13px/18px "Noto Sans", "Open Sans", sans-serif; }
.del { margin-left: 578px; }
.save { margin-left: 18px; width: 118px; }
.below { height: 17px; background: #f6f6f6; }

/* status bar */
.status { display: flex; align-items: center; height: 22px; border-top: 1px solid #567db1; background: linear-gradient(#fff 0 1px, #d7e6f9 1px, #c7dcf8 7px, #b3d0f5 8px, #d7e5f7 20px); color: #1d3a6e; }
.mode { width: 50%; padding-left: 8px; }
.lock { flex: 1; text-align: right; padding-right: 10px; border-left: 1px solid #8fb1dd; line-height: 20px; }
.views { display: flex; padding-left: 4px; border-left: 1px solid #8fb1dd; }
.views button { display: flex; align-items: center; justify-content: center; width: 19px; height: 19px; background: #c9dcf5; border: 1px solid #93aed3; }
.views .on { background: #fcd27e; border-color: #a8926a; }

/* taskbar */
.taskbar { display: flex; align-items: center; height: 30px; background: linear-gradient(#3168d5, #4993e6 2px, #2157d7 5px, #2663e0 24px, #1941a5); color: #fff; font: 11px/16px "DejaVu Sans Condensed", "DejaVu Sans", sans-serif; }
.start { display: flex; align-items: center; gap: 4px; width: 97px; height: 30px; padding-left: 9px; border-radius: 0 8px 8px 0; background: linear-gradient(#5fae5c, #3c8f3b 6px, #3a983a 20px, #2a7a2a); box-shadow: 1px 0 3px #0b2f80; font: italic bold 18px/20px "Liberation Sans", sans-serif; text-shadow: 1px 1px 1px #1d4b1d; }
.quick { display: flex; gap: 7px; width: 85px; padding-left: 12px; }
.tasks { flex: 1; display: flex; gap: 2px; }
.tasks button { display: flex; align-items: center; gap: 3px; width: 158px; height: 25px; padding-left: 9px; border-radius: 3px; background: linear-gradient(#5a9bf8, #3c81f3 4px, #3a7df0 20px, #2f6ad8); white-space: nowrap; }
.tasks .on { background: #1e52b7; box-shadow: inset 1px 1px 2px #0d2f78; }
.ask { margin-right: 11px; }
.lang { margin-right: 15px; }
.tray { display: flex; align-items: center; gap: 2px; width: 147px; height: 30px; border-left: 1px solid #0c4ba0; background: linear-gradient(#0c59b9, #139ee9 3px, #1290e8 22px, #0d78cf); }
.chev { margin-left: -9px; }
.tray span { margin-left: 5px; white-space: nowrap; }
```
